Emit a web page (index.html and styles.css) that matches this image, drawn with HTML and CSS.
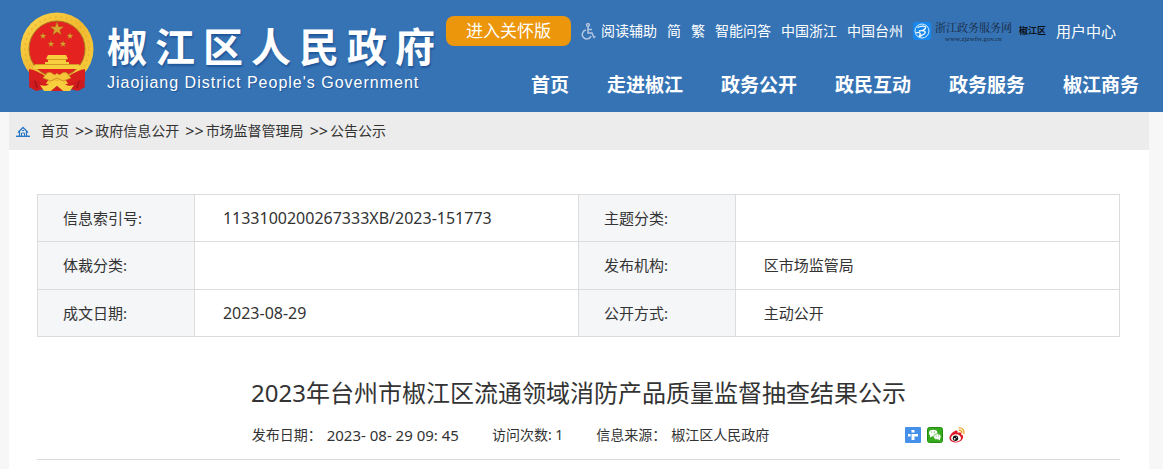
FILE: index.html
```html
<!DOCTYPE html>
<html lang="zh-CN">
<head>
<meta charset="utf-8">
<meta name="viewport" content="width=device-width, initial-scale=1">
<title>2023年台州市椒江区流通领域消防产品质量监督抽查结果公示</title>
<link rel="stylesheet" href="styles.css">
</head>
<body>
<header class="site-header">
  <a class="brand" href="#">
    <svg class="emblem" viewBox="0 0 74 80" aria-hidden="true">
      <defs>
        <linearGradient id="gold" x1="0" y1="0" x2="1" y2="1">
          <stop offset="0" stop-color="#fbd84e"/><stop offset=".5" stop-color="#f0b92f"/><stop offset="1" stop-color="#f9d23f"/>
        </linearGradient>
        <path id="star" d="M0-7 1.7-2.2 6.7-2.2 2.7.9 4.1 5.7 0 2.8-4.1 5.7-2.7.9-6.7-2.2-1.7-2.2Z"/>
      </defs>
      <path d="M10 55C8 64 10 70 9 75L16 79 24 77 31 79 37 74 43 79 50 77 58 79 65 75C64 70 66 64 64 55Z" fill="#cf1b1d"/>
      <path d="M13 62 17 76M61 62 57 76" stroke="#9d1218" stroke-width="1.2" fill="none"/>
      <circle cx="37" cy="37" r="36.500" fill="url(#gold)"/>
      <circle cx="37" cy="37" r="32" fill="none" stroke="#e5ae2c" stroke-width="1.500" stroke-dasharray="1.500 4"/>
      <circle cx="37" cy="37" r="28" fill="#e42320" stroke="#a97420" stroke-width="1"/>
      <g fill="#dba52f" stroke="#9e6a16" stroke-width=".4">
        <use href="#star" x="37" y="17"/>
        <use href="#star" transform="translate(23 24) scale(.48)"/>
        <use href="#star" transform="translate(50 24) scale(.48)"/>
        <use href="#star" transform="translate(31 32) scale(.48)"/>
        <use href="#star" transform="translate(43 32) scale(.48)"/>
      </g>
      <path d="M28 43H46L48 47H46V50H49V52H59L61 57H13L15 52H25V50H28V47H26Z" fill="#f7cf3e"/>
      <path d="M27 47.500H47M15 52.500H59" stroke="#c98a1e" stroke-width=".8"/>
      <path d="M9 57C18 59 24 63 29 67L25 73C18 70 14 67 9 69ZM65 57C56 59 50 63 45 67L49 73C56 70 60 67 65 69Z" fill="#d91f1e"/>
      <path d="M27 61C32 58 34 66 37 61 40 66 42 58 47 61L51 66 43 69 37 66 31 69 23 66Z" fill="#f5c63a" stroke="#c68520" stroke-width=".8"/>
      <path d="M20 73C26 75 29 73 32 69H42C45 73 48 75 54 73L50 79H43L37 74 31 79H24Z" fill="#f7cf3e"/>
      <path d="M31 79 37 74 43 79Z" fill="#d51d1d"/>
    </svg>
    <span class="brand-text">
      <span class="brand-name">椒江区人民政府</span>
      <span class="brand-en">Jiaojiang District People's Government</span>
    </span>
  </a>
  <div class="header-right">
    <div class="tools">
      <button class="care" type="button">进入关怀版</button>
      <a class="assist" href="#">
        <svg class="wheelchair" viewBox="0 0 15 17" fill="none" stroke="#b5c7de" stroke-width="1.500" aria-hidden="true">
          <circle cx="7" cy="2" r="1.400"/><path d="M7 4V10H11L13 14.500 14.500 13.500M7 6.500H11M5 7A4.500 4.500 0 1 0 10 13"/>
        </svg>阅读辅助</a>
      <a href="#">简</a>
      <a href="#">繁</a>
      <a href="#">智能问答</a>
      <a href="#">中国浙江</a>
      <a href="#">中国台州</a>
      <a class="service" href="#">
        <svg class="service-mark" viewBox="0 0 18 18" aria-hidden="true">
          <rect width="18" height="18" rx="3" fill="#1688ef"/>
          <circle cx="9" cy="9" r="7" fill="none" stroke="#d9efff" stroke-width="1"/>
          <path d="M4.500 5.500C8 3.500 13 3.500 12.500 6 12 8 8 9 6 9 10 8 13 9 12 11 11 13 8 13 6 15M3 11C6 9.500 9 11.500 6 14" fill="none" stroke="#fff" stroke-width="1.300"/>
        </svg>
        <span class="service-text"><span class="service-name">浙江政务服务网</span><span class="service-url">www.zjzwfw.gov.cn</span></span>
        <span class="service-area">椒江区</span>
      </a>
      <a class="user" href="#">用户中心</a>
    </div>
    <nav class="main-nav">
      <a href="#">首页</a>
      <a href="#">走进椒江</a>
      <a href="#">政务公开</a>
      <a href="#">政民互动</a>
      <a href="#">政务服务</a>
      <a href="#">椒江商务</a>
    </nav>
  </div>
</header>
<main class="page">
  <nav class="crumbs">
    <svg class="home" viewBox="0 0 14 11" fill="none" stroke="#2878c8" aria-hidden="true">
      <path d="M0 10.300H14" stroke-width="1.400"/><path d="M2 6.500 7 1.500 12 6.500M3.500 5.500V10M10.500 5.500V10" stroke-width="1.300"/><path d="M5.500 10V7H8.500V10M6 4.500H8"/>
    </svg>
    <a href="#">首页</a>
    <span class="sep">&gt;&gt;</span><a href="#">政府信息公开</a>
    <span class="sep">&gt;&gt;</span><a href="#">市场监督管理局</a>
    <span class="sep">&gt;&gt;</span><a href="#">公告公示</a>
  </nav>
  <article class="article">
    <table class="info">
      <colgroup><col class="col-label"><col class="col-value"><col class="col-label"><col class="col-value"></colgroup>
      <tbody>
        <tr><th scope="row">信息索引号:</th><td class="code">1133100200267333XB/2023-151773</td><th scope="row">主题分类:</th><td></td></tr>
        <tr><th scope="row">体裁分类:</th><td></td><th scope="row">发布机构:</th><td>区市场监管局</td></tr>
        <tr><th scope="row">成文日期:</th><td class="code">2023-08-29</td><th scope="row">公开方式:</th><td>主动公开</td></tr>
      </tbody>
    </table>
    <h1 class="title">2023年台州市椒江区流通领域消防产品质量监督抽查结果公示</h1>
    <div class="meta">
      <span class="meta-item">发布日期：<span class="date">2023- 08- 29 09: 45</span></span>
      <span class="meta-item">访问次数: 1</span>
      <span class="meta-item">信息来源：<span>椒江区人民政府</span></span>
      <span class="share">
        <a href="#" aria-label="分享"><svg viewBox="0 0 16 16" aria-hidden="true"><rect width="16" height="16" rx="1" fill="#4490ea"/><path d="M6.500 3H9.500V5.500H6.500ZM3 7H5.500V9.500H3ZM6.500 7H13V9.500H9.500V13H6.500Z" fill="#fff"/></svg></a>
        <a href="#" aria-label="微信"><svg viewBox="0 0 16 16" aria-hidden="true"><rect x=".5" y=".5" width="15" height="15" rx="2" fill="#36a91c" stroke="#218c10"/><ellipse cx="6.200" cy="6" rx="4.200" ry="3.300" fill="#fff"/><path d="M3 8V10.500L6 9Z" fill="#fff"/><ellipse cx="10.300" cy="9.700" rx="3.700" ry="2.900" fill="#fff" stroke="#36a91c" stroke-width=".6"/><path d="M11 12 13 13.500V11Z" fill="#fff"/><g fill="#36a91c"><circle cx="4.800" cy="5" r=".6"/><circle cx="7.500" cy="5" r=".6"/><circle cx="9.200" cy="9" r=".5"/><circle cx="11.600" cy="9" r=".5"/></g></svg></a>
        <a href="#" aria-label="微博"><svg viewBox="0 0 16 16" aria-hidden="true"><path d="M6 4C8 3 9 4 8.500 6 11 5 13 5.500 12 7.500 14.500 8 14.500 10 13.500 12 11 16.500 2 16.500.5 12 0 9 3 5 6 4Z" fill="#dd1824"/><ellipse cx="7" cy="11" rx="5" ry="3.700" fill="#fff"/><circle cx="6.500" cy="11.200" r="2.700" fill="#111"/><circle cx="5.700" cy="11.800" r=".9" fill="#fff"/><circle cx="7.500" cy="10.300" r=".5" fill="#fff"/><path d="M9.500.9C13 .3 15.800 3 14.700 7M9.700 3.300C11.800 3 13.300 4.300 12.600 6.200" fill="none" stroke="#f4a52a" stroke-width="1.300"/></svg></a>
      </span>
    </div>
  </article>
</main>
</body>
</html>
```
FILE: styles.css
```css
* { box-sizing: border-box; }
body {
  display: flex;
  flex-direction: column;
  min-height: 100vh;
  margin: 0;
  background: #f7f7f7;
  color: #333;
  font: 14px/20px "Noto Sans", "Noto Sans CJK SC", sans-serif;
}
a { color: inherit; text-decoration: none; white-space: nowrap; }
svg { display: block; flex: none; }

.site-header {
  display: flex;
  justify-content: space-between;
  height: 112px;
  padding: 12px 24px 0 20px;
  background: #3673b5;
  color: #fff;
}
.brand { display: flex; gap: 13px; }
.emblem { width: 74px; height: 80px; }
.brand-text { display: flex; flex-direction: column; padding-top: 9px; }
.brand-name {
  font-size: 40px;
  line-height: 52px;
  font-weight: 700;
  letter-spacing: 8px;
  margin-right: -8px;
  text-shadow: 1px 2px 2px #1f569a;
}
.brand-en {
  font-family: "Liberation Sans", Arial, sans-serif;
  font-size: 16px;
  line-height: 20px;
  letter-spacing: 1px;
  text-shadow: 1px 1px 1px #1f569a;
}

.header-right { display: flex; flex-direction: column; align-items: flex-end; padding-top: 4px; }
.tools { display: flex; align-items: center; gap: 10px; padding-right: 23px; }
.care {
  width: 125px;
  height: 30px;
  padding: 0;
  border: 0;
  border-radius: 8px;
  background: #ec960c;
  color: #fff;
  font: 17px/30px "Noto Sans", "Noto Sans CJK SC", sans-serif;
}
.assist { display: flex; align-items: center; gap: 5px; }
.wheelchair { width: 15px; height: 17px; }
.service { display: flex; align-items: center; color: #17283d; }
.service-mark { width: 18px; height: 18px; margin-right: 4px; }
.service-text { display: flex; flex-direction: column; margin-right: 7px; }
.service-name { font: 11px/16px "Noto Serif CJK SC", "Noto Sans CJK SC", serif; }
.service-url { font: 7px/8px "Liberation Serif", serif; text-align: center; }
.service-area { font-size: 9px; font-weight: 700; color: #0a1017; }
.user { font-size: 15px; }
.main-nav {
  display: flex;
  gap: 38px;
  padding-top: 25px;
  font-size: 19px;
  line-height: 28px;
  font-weight: 700;
}

.page { flex: 1; margin: 0 14px 0 9px; background: #fff; }
.crumbs {
  display: flex;
  align-items: center;
  height: 38px;
  padding-left: 7px;
  background: #ececec;
}
.home { width: 14px; height: 11px; margin-right: 11px; }
.sep { margin: 0 2px 0 6px; font-size: 16px; }

.article { padding: 44px 29px 0 28px; }
.info {
  width: 100%;
  height: 143px;
  table-layout: fixed;
  border-collapse: collapse;
  font-size: 15px;
}
.col-label { width: 14.5%; }
.col-value { width: 35.5%; }
.info th, .info td {
  padding: 0 0 0 28px;
  border: 1px solid #dcdcdc;
  text-align: left;
  font-weight: 400;
}
.info th { padding-left: 25px; background: #f5f6f8; }
.info .code { font-size: 16px; }

.title {
  margin: 38px 0 0;
  font-size: 24px;
  line-height: 36px;
  font-weight: 400;
  text-align: center;
}
.meta {
  display: flex;
  justify-content: center;
  align-items: center;
  gap: 33px;
  margin-top: 14px;
  padding: 0 0 14px 60px;
  border-bottom: 1px solid #dcdcdc;
}
.meta-item { display: flex; gap: 5px; }
.date { font-size: 15px; }
.share { display: flex; gap: 6px; margin-left: 103px; }
.share svg { width: 16px; height: 16px; }
```
